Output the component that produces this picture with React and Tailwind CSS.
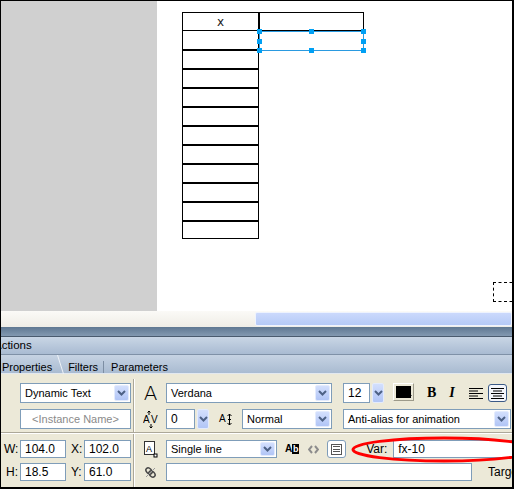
import React from "react";

const Chev = () => (
  <svg width="9" height="6" viewBox="0 0 9 6">
    <path d="M1 1L4.5 4.5L8 1" stroke="#4d6185" strokeWidth="2" fill="none" />
  </svg>
);

function DropBtn({ className = "" }) {
  return (
    <div
      className={
        "flex items-center justify-center shrink-0 rounded-[2px] border border-[#e3ebfd] bg-linear-to-b from-[#d3dffd] to-[#b1c5f6] " +
        className
      }
    >
      <Chev />
    </div>
  );
}

function Select({ className = "", text }) {
  return (
    <div className={"h-full bg-white border border-[#7f9db9] flex items-stretch shrink-0 " + className}>
      <div className="flex-1 flex items-center pl-[4px] whitespace-nowrap overflow-hidden">{text}</div>
      <DropBtn className="w-[15px] m-[1px]" />
    </div>
  );
}

function Input({ className = "", children }) {
  return (
    <div className={"h-full bg-white border border-[#7f9db9] flex items-center px-[4px] whitespace-nowrap overflow-hidden shrink-0 " + className}>
      {children}
    </div>
  );
}

const Handle = ({ className }) => <div className={"absolute w-[5px] h-[5px] bg-[#00a0f4] " + className} />;

export default function App() {
  const rows = Array.from({ length: 11 });
  return (
    <div className="relative w-[514px] h-[489px] bg-white border-t border-l border-r-2 border-b-2 border-black flex flex-col overflow-hidden font-['Liberation_Sans',Arial,sans-serif] text-[11px] text-black">
      {/* stage */}
      <div className="h-[310px] flex shrink-0">
        <div className="w-[156px] bg-[#d0d0d0]" />
        <div className="flex-1 relative bg-white overflow-hidden">
          {/* table column */}
          <div className="absolute left-[25px] top-[11px] w-[77px] border border-black">
            <div className="h-[18px] border-b border-black flex items-center justify-center text-[12px] font-['DejaVu_Sans',sans-serif] text-[#222]">
              x
            </div>
            {rows.map((_, i) => (
              <div
                key={i}
                className={
                  i === 0
                    ? "h-[20px] border-b-2 border-black"
                    : i === 10
                    ? "h-[16px]"
                    : "h-[19px] border-b-2 border-black"
                }
              />
            ))}
          </div>
          {/* right header cell */}
          <div className="absolute left-[102px] top-[11px] w-[105px] h-[19px] border border-black" />
          {/* selection */}
          <div className="absolute left-[102px] top-[30px] w-[105px] h-[20px] border border-[#2a9ae0]" />
          <Handle className="left-[100px] top-[28px]" />
          <Handle className="left-[152px] top-[28px]" />
          <Handle className="left-[204px] top-[28px]" />
          <Handle className="left-[100px] top-[38px]" />
          <Handle className="left-[204px] top-[38px]" />
          <Handle className="left-[100px] top-[47px]" />
          <Handle className="left-[152px] top-[47px]" />
          <Handle className="left-[204px] top-[47px]" />
          {/* dotted box */}
          <div className="absolute left-[336px] top-[281px] w-[25px] h-[20px] border border-dashed border-black" />
        </div>
      </div>

      {/* horizontal scrollbar */}
      <div className="h-[16px] shrink-0 flex bg-linear-to-b from-[#fbfaf7] to-[#efede6]">
        <div className="w-[254px]" />
        <div className="flex-1 mt-[1px] h-[14px] rounded-[2px] border border-[#eef3fe] bg-linear-to-b from-[#cbd9fc] to-[#b5caf6]" />
      </div>

      {/* dark band */}
      <div className="h-[10px] shrink-0 bg-linear-to-b from-[#5f7891] to-[#8399b1] border-b border-[#4a5b6e]" />

      {/* panel header */}
      <div className="h-[18px] shrink-0 flex items-center overflow-hidden bg-linear-to-b from-[#c9d6e5] to-[#a9bbd2] border-b border-[#7f91a7]">
        <span className="ml-[-7px] text-[11.5px]">Actions</span>
      </div>

      {/* tabs */}
      <div className="relative h-[19px] shrink-0 flex items-center pt-[6px] bg-linear-to-b from-[#c6d3e3] to-[#a9bbd1] border-b border-[#e2e8ef] text-[11px]">
        <span className="ml-[1px]">Properties</span>
        <svg className="absolute left-[56px] top-0" width="8" height="19" viewBox="0 0 8 19">
          <path d="M0.5 0L6.5 19" stroke="#eef2f7" strokeWidth="1" />
        </svg>
        <span className="ml-[16px]">Filters</span>
        <div className="ml-[5px] w-px h-[12px] bg-[#7d8ea3]" />
        <span className="ml-[7px]">Parameters</span>
      </div>

      {/* properties panel */}
      <div className="flex-1 bg-[#ece9d8] flex flex-col">
        {/* top section */}
        <div className="h-[58px] flex">
          <div className="w-[132px] shrink-0 pl-[19px] pt-[9px] flex flex-col gap-[6px]">
            <div className="h-[20px] flex">
              <Select className="w-[111px]" text="Dynamic Text" />
            </div>
            <div className="h-[20px] flex">
              <Input className="w-[111px] justify-center text-[#8a8a8a]">&lt;Instance Name&gt;</Input>
            </div>
          </div>
          <div className="w-[2px] shrink-0 mt-[5px] border-l border-[#aca899] bg-white" />
          <div className="flex-1 pt-[9px] flex flex-col gap-[6px] overflow-hidden">
            {/* row 1 */}
            <div className="h-[20px] flex items-center">
              <div className="w-[31px] shrink-0 h-full flex items-center justify-center">
                <span className="text-[20px] leading-none font-['DejaVu_Sans',sans-serif] font-extralight">A</span>
              </div>
              <Select className="w-[166px]" text="Verdana" />
              <Input className="ml-[11px] w-[27px] text-[12px]">12</Input>
              <DropBtn className="ml-[2px] w-[12px] h-full" />
              <div className="ml-[9px] w-[21px] h-[18px] self-start border border-t-white border-l-white border-r-[#9d9a8a] border-b-[#9d9a8a] relative shrink-0">
                <div className="absolute left-[2px] top-[2px] w-[15px] h-[12px] bg-black" />
                <svg className="absolute right-[1px] bottom-[1px]" width="6" height="4" viewBox="0 0 6 4">
                  <path d="M0 0H6L3 3Z" fill="#000" />
                </svg>
              </div>
              <span className="ml-[13px] shrink-0 font-['Liberation_Serif',serif] font-bold text-[14px] leading-none">B</span>
              <span className="ml-[13px] shrink-0 font-['Liberation_Serif',serif] font-bold italic text-[14px] leading-none">I</span>
              <svg className="ml-[14px] shrink-0" width="14" height="12" viewBox="0 0 14 12">
                <path d="M0 1.5H14M0 4H9M0 6.5H14M0 9H9M0 11.5H14" stroke="#000" strokeWidth="1" />
              </svg>
              <div className="ml-[5px] w-[19px] h-[18px] shrink-0 rounded-[3px] border border-[#3b5a86] bg-[#f4f6fb] flex items-center justify-center">
                <svg width="13" height="12" viewBox="0 0 13 12">
                  <path d="M0 1.5H13M2 4H11M0 6.5H13M2 9H11M0 11.5H13" stroke="#000" strokeWidth="1" />
                </svg>
              </div>
            </div>
            {/* row 2 */}
            <div className="h-[20px] flex items-center">
              <div className="w-[31px] shrink-0 h-full flex items-center justify-center">
                <svg width="16" height="19" viewBox="0 0 16 19">
                  <text x="0" y="13" fontSize="10" fontFamily="Liberation Sans, sans-serif">A</text>
                  <text x="8" y="13" fontSize="10" fontFamily="Liberation Sans, sans-serif">V</text>
                  <path d="M6 1V5M4.5 2.5L6 1L7.5 2.5" stroke="#000" strokeWidth="1" fill="none" />
                  <path d="M8 14V18M6.5 16.5L8 18L9.5 16.5" stroke="#000" strokeWidth="1" fill="none" />
                </svg>
              </div>
              <Input className="w-[29px] text-[12px]">0</Input>
              <DropBtn className="ml-[2px] w-[12px] h-full" />
              <div className="ml-[10px] w-[14px] shrink-0 flex items-center">
                <span className="text-[10px] leading-none">A</span>
                <svg width="5" height="11" viewBox="0 0 5 11" className="ml-[1px]">
                  <path d="M2.5 0V11M0.5 2L2.5 0L4.5 2M0.5 9L2.5 11L4.5 9M1 5.5H4" stroke="#000" strokeWidth="1" fill="none" />
                </svg>
              </div>
              <Select className="ml-[9px] w-[90px]" text="Normal" />
              <Select className="ml-[11px] w-[168px]" text="Anti-alias for animation" />
            </div>
          </div>
        </div>

        {/* horizontal separator */}
        <div className="h-[2px] border-t border-[#aca899] bg-white" />

        {/* bottom section */}
        <div className="h-[53px] flex">
          <div className="w-[132px] shrink-0 pt-[6px] flex flex-col gap-[5px]">
            <div className="h-[18px] flex items-center">
              <span className="w-[19px] shrink-0 pl-[3px] text-[12px]">W:</span>
              <Input className="w-[46px] text-[12px]">104.0</Input>
              <span className="ml-[5px] w-[13px] shrink-0 text-[12px]">X:</span>
              <Input className="w-[47px] text-[12px]">102.0</Input>
            </div>
            <div className="h-[18px] flex items-center">
              <span className="w-[19px] shrink-0 pl-[5px] text-[12px]">H:</span>
              <Input className="w-[46px] text-[12px]">18.5</Input>
              <span className="ml-[5px] w-[13px] shrink-0 text-[12px]">Y:</span>
              <Input className="w-[47px] text-[12px]">61.0</Input>
            </div>
          </div>
          <div className="w-[2px] shrink-0 border-l border-[#aca899] bg-white" />
          <div className="flex-1 pt-[6px] flex flex-col gap-[5px] overflow-hidden">
            {/* row 3 */}
            <div className="h-[18px] flex items-center">
              <div className="w-[31px] shrink-0 h-full flex items-center justify-center">
                <svg width="14" height="17" viewBox="0 0 14 17">
                  <rect x="0.5" y="0.5" width="10" height="13" fill="#fff" stroke="#333" />
                  <text x="2" y="11" fontSize="9" fontFamily="Liberation Sans, sans-serif">A</text>
                  <rect x="10" y="13" width="3" height="3" fill="#fff" stroke="#000" />
                </svg>
              </div>
              <Select className="w-[111px]" text="Single line" />
              <div className="ml-[8px] flex items-center shrink-0">
                <span className="text-[10px] font-bold leading-none">A</span>
                <span className="w-[7px] h-[10px] bg-black text-white text-[9px] font-bold leading-[10px] text-center">b</span>
              </div>
              <svg className="ml-[9px] shrink-0" width="11" height="9" viewBox="0 0 11 9">
                <path d="M4 1L1 4.5L4 8M7 1L10 4.5L7 8" stroke="#8c8c8c" strokeWidth="2" fill="none" />
              </svg>
              <div className="ml-[8px] w-[19px] h-[18px] shrink-0 rounded-[3px] border border-[#7f9db9] bg-white flex items-center justify-center">
                <div className="w-[11px] h-[11px] border border-[#555] flex flex-col justify-evenly px-[1px]">
                  <div className="h-px bg-[#555]" />
                  <div className="h-px bg-[#555]" />
                  <div className="h-px bg-[#555]" />
                </div>
              </div>
              <span className="ml-[20px] w-[20px] text-[12px] shrink-0">Var:</span>
              <Input className="ml-[7px] w-[130px] text-[12px]">fx-10</Input>
            </div>
            {/* row 4 */}
            <div className="h-[18px] flex items-center">
              <div className="w-[31px] shrink-0 h-full flex items-center justify-center">
                <svg width="13" height="13" viewBox="0 0 13 13">
                  <ellipse cx="5" cy="5" rx="3.5" ry="2.5" transform="rotate(45 5 5)" fill="none" stroke="#444" strokeWidth="1.5" />
                  <ellipse cx="8" cy="8" rx="3.5" ry="2.5" transform="rotate(45 8 8)" fill="none" stroke="#444" strokeWidth="1.5" />
                  <path d="M2 11L11 2" stroke="#999" strokeWidth="1" />
                </svg>
              </div>
              <Input className="w-[306px]" />
              <span className="ml-[16px] shrink-0 text-[12px] whitespace-nowrap">Target</span>
            </div>
          </div>
        </div>
      </div>

      {/* red ellipse annotation */}
      <svg className="absolute left-[350px] top-[435px] pointer-events-none" width="200" height="30" viewBox="0 0 200 30">
        <ellipse cx="93" cy="13.5" rx="91" ry="11.5" fill="none" stroke="#ff0000" strokeWidth="3" />
      </svg>
    </div>
  );
}
